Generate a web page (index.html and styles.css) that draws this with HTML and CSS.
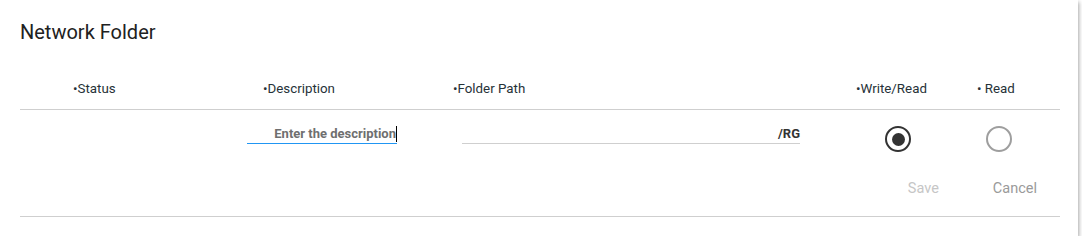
FILE: index.html
```html
<!DOCTYPE html>
<html>
<head>
<meta charset="utf-8">
<link rel="stylesheet" href="styles.css">
</head>
<body>
<div class="card">
  <h1 class="title">Network Folder</h1>
  <div class="grid head">
    <div class="c1">•Status</div>
    <div class="c2">•Description</div>
    <div class="c3">•Folder Path</div>
    <div class="c4">•Write/Read</div>
    <div class="c5">• Read</div>
  </div>
  <div class="grid row">
    <div class="c1"></div>
    <div class="c2"><div class="input desc"><span class="ph">Enter the description</span><span class="caret"></span></div></div>
    <div class="c3"><div class="input path"><span class="suffix">/RG</span></div></div>
    <div class="c4"><span class="radio checked"><span class="dot"></span></span></div>
    <div class="c5"><span class="radio"></span></div>
  </div>
  <div class="actions">
    <button class="btn save">Save</button>
    <button class="btn cancel">Cancel</button>
  </div>
  <div class="rule"></div>
</div>
</body>
</html>
```
FILE: styles.css
```css
html, body { margin: 0; padding: 0; background: #fff; }
body { font-family: Roboto, "Noto Sans", Arial, sans-serif; color: #212121; }
.card {
  width: 1078px;
  height: 236px;
  box-sizing: border-box;
  padding: 20px 18px 0 20px;
  background: #fff;
  box-shadow: 1px 2px 4px rgba(0,0,0,0.35);
}
.title {
  margin: 0;
  font-size: 20px;
  font-weight: 400;
  line-height: 24px;
  color: #212121;
}
.grid {
  display: grid;
  grid-template-columns: 190px 190px 425px 125px 110px;
}
.head {
  margin-top: 35px;
  font-size: 13.33px;
  line-height: 20px;
  color: #263238;
  padding-bottom: 10px;
  border-bottom: 1px solid #cfcfcf;
}
.head .c1, .head .c2, .head .c3 { padding-left: 53px; }
.head .c4 { padding-left: 31px; }
.head .c5 { padding-left: 27px; }
.row { padding-top: 15px; align-items: start; }
.input {
  height: 18px;
  line-height: 18px;
  display: flex;
  justify-content: flex-end;
  align-items: center;
  font-size: 13px;
  font-weight: 700;
}
.desc {
  margin-left: 37px;
  width: 150px;
  border-bottom: 1px solid #2196f3;
  color: #6f6f6f;
}
.caret {
  display: inline-block;
  width: 1px;
  height: 16px;
  background: #000;
}
.path {
  margin-left: 62px;
  width: 338px;
  border-bottom: 1px solid #cfcfcf;
  color: #333;
}
.radio {
  display: flex;
  align-items: center;
  justify-content: center;
  box-sizing: border-box;
  width: 26px;
  height: 26px;
  border-radius: 50%;
  border: 2px solid #9e9e9e;
  margin-top: 1px;
}
.c4 .radio { margin-left: 60px; }
.c5 .radio { margin-left: 36px; }
.radio.checked { border: 2.5px solid #333; }
.dot { width: 13px; height: 13px; border-radius: 50%; background: #333; }
.actions {
  margin-top: 21px;
  display: flex;
  justify-content: flex-end;
  gap: 6px;
}
.btn {
  font-family: Roboto, "Noto Sans", Arial, sans-serif;
  font-size: 14.5px;
  line-height: 20px;
  padding: 6px 23px 6px 25px;
  border: 0;
  background: transparent;
  margin: 0;
}
.save { color: #c6c6c6; }
.cancel { color: #9a9a9a; }
.rule {
  margin-top: 11px;
  border-top: 1px solid #cfcfcf;
}
```
